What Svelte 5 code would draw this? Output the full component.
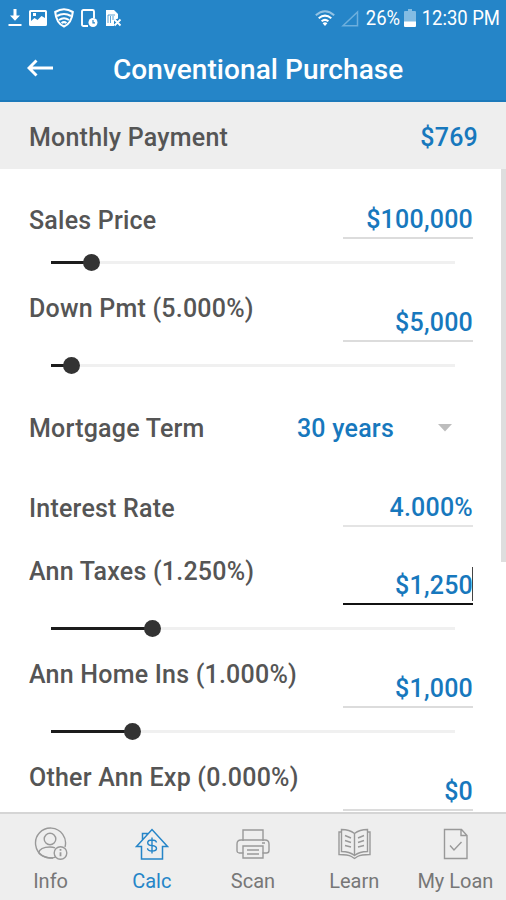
<script lang="ts">
    type Field = {
        label: string;
        value: string;
        kind: string;
        slider?: number;
        focused?: boolean;
    };

    const fields: Field[] = [
        { label: "Sales Price", value: "$100,000", kind: "price", slider: 10 },
        { label: "Down Pmt (5.000%)", value: "$5,000", kind: "stacked", slider: 5 },
        { label: "Mortgage Term", value: "30 years", kind: "term" },
        { label: "Interest Rate", value: "4.000%", kind: "rate" },
        { label: "Ann Taxes (1.250%)", value: "$1,250", kind: "stacked", slider: 25, focused: true },
        { label: "Ann Home Ins (1.000%)", value: "$1,000", kind: "stacked", slider: 20 },
        { label: "Other Ann Exp (0.000%)", value: "$0", kind: "stacked", slider: 0 },
    ];

    const tabs = ["Info", "Calc", "Scan", "Learn", "My Loan"];
    let active = "Calc";
</script>

<div class="screen">
    <header>
        <div class="status">
            <div class="notifications">
                <svg width="14" height="20" viewBox="0 0 14 20" fill="#fff">
                    <path d="M5.500 1h3v6.500h3.500L7 12.800 2 7.500h3.500zM.5 16h13v2H.5z" />
                </svg>
                <svg width="18" height="18" viewBox="0 0 18 18">
                    <path fill="#fff" fill-rule="evenodd" d="M1.500 1h15q1.500 0 1.500 1.500v13q0 1.500-1.500 1.500h-15Q0 17 0 15.500v-13Q0 1 1.500 1zM2 3v9l3.500-3 3 2 4-4L16 9V3zM4 4h3v3H4z" />
                </svg>
                <svg width="20" height="20" viewBox="0 0 20 20" fill="none" stroke="#fff" stroke-width="2.100">
                    <path d="M1.200 4Q10-1.500 18.800 4C18 12 15 16.500 10 18.500 5 16.500 2 12 1.200 4z" />
                    <path d="M3 8q7-4 14 0M5 12q5-3.400 10 0M7.500 15q2.500-1.800 5 0" />
                </svg>
                <svg width="17" height="19" viewBox="0 0 17 19" fill="none" stroke="#fff">
                    <path stroke-width="1.900" d="M7 17H2.500Q1 17 1 15.500v-13Q1 1 2.500 1h9Q13 1 13 2.500V9" />
                    <circle cx="12" cy="13.500" r="4.500" fill="#fff" stroke="none" />
                    <path stroke="#2585c8" stroke-width="1.200" d="M12 11v2.800h2" />
                </svg>
                <svg width="17" height="18" viewBox="0 0 17 18" fill="none">
                    <path fill="#fff" d="M1 1h8l4 4v4.500l-4 1.500v6H1z" />
                    <path stroke="#2585c8" opacity=".75" d="M3 14V6h7M5.500 7v7M8 7v4" />
                    <path stroke="#fff" stroke-width="1.800" d="m9.500 10.500 6 6m0-6-6 6" />
                </svg>
            </div>
            <div class="system">
                <svg width="20" height="17" viewBox="0 0 20 17" fill="none" stroke="#fff" stroke-width="2">
                    <path opacity=".5" d="M.8 5.200q9.200-8 18.400 0" />
                    <path d="M3.700 8.200q6.300-5.200 12.600 0M6.600 11.200q3.400-2.700 6.800 0" />
                    <path fill="#fff" stroke="none" d="M7.600 13.200q2.400-1.800 4.800 0L10 16z" />
                </svg>
                <svg class="signal" width="18" height="17" viewBox="0 0 18 17" fill="none" stroke="#6dafdd" stroke-width="1.500">
                    <path d="M2 15.800 16.500 2v13.800z" />
                </svg>
                <span class="percent">26%</span>
                <svg class="battery" width="12" height="18" viewBox="0 0 12 18">
                    <path fill="#83bce3" d="M4 0h4v2h3q1 0 1 1v10H0V3q0-1 1-1h3z" />
                    <path fill="#fff" d="M0 12.500h12V17q0 1-1 1H1q-1 0-1-1z" />
                </svg>
                <span class="clock">12:30 PM</span>
            </div>
        </div>
        <div class="titlebar">
            <svg width="27" height="18" viewBox="0 0 27 18" fill="none" stroke="#fff" stroke-width="2.900">
                <path d="M26 9H2M9.500 1.500 2 9l7.500 7.500" />
            </svg>
            <h1>Conventional Purchase</h1>
        </div>
    </header>

    <section class="summary">
        <span>Monthly Payment</span>
        <span class="amount">$769</span>
    </section>

    <main>
        <div class="fields">
            {#each fields as field}
                <div class="field {field.kind}">
                    <div class="line">
                        <span class="label">{field.label}</span>
                        <span class="value" class:focused={field.focused}>{field.value}</span>
                        {#if field.kind === "term"}
                            <svg class="caret" width="14" height="8" viewBox="0 0 14 8" fill="#bdbdbd">
                                <path d="M0 0h14L7 7.500z" />
                            </svg>
                        {/if}
                    </div>
                    {#if field.slider !== undefined}
                        <div class="slider">
                            <div class="done" style="width: {field.slider}%"></div>
                            <div class="thumb"></div>
                        </div>
                    {/if}
                </div>
            {/each}
        </div>
        <div class="scrollbar"></div>
    </main>

    <nav>
        {#each tabs as tab}
            <button class:active={tab === active} on:click={() => (active = tab)}>
                <svg width="34" height="34" viewBox="0 0 34 34" fill="none" stroke="currentColor" stroke-width="1.400">
                    {#if tab === "Info"}
                        <path d="M21.500 30.200A15 15 0 1 1 31 20" />
                        <circle cx="16" cy="12" r="5.800" />
                        <path d="M4.500 26q1.500-6 11.500-6 3 0 5 .8M4.500 26q5 5 14.500 5" />
                        <circle cx="26.500" cy="26" r="6.300" />
                        <path stroke-width="1.800" d="M26.500 25.300v4M26.500 22v1.800" />
                    {:else if tab === "Calc"}
                        <path stroke-width="1.500" d="M1.500 19.500 17 2.500l15.500 17h-5V32h-21V19.500zM7.500 13V6.500H12V8" />
                        <path d="M21.500 15.500q-.5-2.500-4.500-2.500-4.300 0-4.300 2.700 0 2.500 4.300 2.800 4.500.4 4.500 3 0 2.500-4.500 2.500-4.300 0-4.500-2.800M17 10.500v16" />
                    {:else if tab === "Scan"}
                        <path d="M7 14V3h20v11M7.500 26H3.500Q1 26 1 23.500V17q0-4 4-4h24q4 0 4 4v6.500q0 2.500-2.500 2.500h-4" />
                        <path d="M7 19h20v12H7zM11 23h12M11 27h12M26 16h3" />
                    {:else if tab === "Learn"}
                        <path d="M17.500 6.500Q12.500 2.500 4.500 2.500v22q8 0 13 4 5-4 13-4v-22q-8 0-13 4zM17.500 6.500v22" />
                        <path d="M4.500 5H2v22.500q9 0 12.500 2l3 2 3-2q3.500-2 12.500-2V5h-2.500M8 8.500l6 2.500M8 13.500l6 2M8 18.500l6 1.500M27 8.500l-6 2.500M27 13.500l-6 2M27 18.500l-6 1.500" />
                    {:else}
                        <path d="M6.500 2.500h17l5.500 6v23H6.500zM23 2.500v6h6M12 18.500l4 4.500 7.500-8" />
                    {/if}
                </svg>
                <span>{tab}</span>
            </button>
        {/each}
    </nav>
</div>

<style>
    :global(body) {
        margin: 0;
    }
    .screen {
        width: 506px;
        height: 900px;
        display: flex;
        flex-direction: column;
        overflow: hidden;
        background: #fff;
        color: #555;
        font-family: Roboto, "Liberation Sans", sans-serif;
        font-size: 25px;
        font-weight: 500;
        letter-spacing: 0.22px;
    }
    header {
        box-sizing: border-box;
        height: 102px;
        flex: none;
        background: #2585c8;
        border-bottom: 2px solid #1c79ba;
        color: #fff;
    }
    .status {
        height: 36px;
        display: flex;
        justify-content: space-between;
        align-items: center;
        padding: 0 6px 0 7px;
    }
    .notifications {
        display: flex;
        align-items: center;
        gap: 7px;
        padding-left: 1px;
    }
    .system {
        display: flex;
        align-items: center;
        font-size: 20.5px;
        font-weight: 400;
        letter-spacing: 0;
        white-space: nowrap;
    }
    .percent, .clock {
        transform: scaleX(0.9);
        transform-origin: right;
    }
    .percent {
        margin-left: -4px;
    }
    .clock {
        margin-left: -9px;
    }
    .signal {
        margin: 0 7px 0 6px;
    }
    .battery {
        margin: 0 6px 0 4px;
    }
    .titlebar {
        height: 64px;
        display: flex;
        align-items: center;
        padding: 0 27px;
        gap: 59px;
    }
    h1 {
        margin: 3px 0 0;
        font-size: 28px;
        font-weight: 500;
        letter-spacing: 0.07px;
        white-space: nowrap;
    }
    .summary {
        box-sizing: border-box;
        height: 67px;
        flex: none;
        display: flex;
        justify-content: space-between;
        align-items: center;
        padding: 3px 28px 0 29px;
        background: #eee;
    }
    .amount, .value {
        color: #1778bd;
    }
    main {
        flex: 1;
        min-height: 0;
        display: flex;
        overflow: hidden;
    }
    .fields {
        flex: 1;
        padding: 18px 28px 0 29px;
    }
    .scrollbar {
        width: 5px;
        height: 393px;
        background: #dedede;
    }
    .field {
        height: 103px;
    }
    .line {
        height: 52px;
        display: flex;
        justify-content: space-between;
        align-items: flex-start;
    }
    .label {
        line-height: 28px;
        padding-top: 5px;
        white-space: nowrap;
    }
    .value {
        box-sizing: border-box;
        width: 130px;
        height: 52px;
        padding-top: 19px;
        border-bottom: 2px solid #dcdcdc;
        line-height: 28px;
        text-align: right;
    }
    .value.focused {
        border-bottom-color: #111;
        background: linear-gradient(#444, #444) right 14px / 1px 34px no-repeat;
    }
    .price .label {
        padding-top: 20px;
    }
    .term {
        height: 70px;
    }
    .term .line {
        height: 70px;
        align-items: center;
    }
    .term .label {
        padding: 2px 0 0;
    }
    .term .value {
        width: auto;
        height: auto;
        padding: 2px 0 0;
        border: 0;
        margin-left: auto;
    }
    .caret {
        margin: 0 21px 0 44px;
    }
    .rate {
        box-sizing: border-box;
        height: 90px;
        padding-top: 12px;
    }
    .rate .label {
        padding-top: 20px;
    }
    .rate .value {
        border-color: #e4e4e4;
    }
    .slider {
        display: flex;
        align-items: center;
        width: 404px;
        height: 17px;
        margin: 15px 0 0 22px;
        background: linear-gradient(#f0f0f0, #f0f0f0) center / 100% 3px no-repeat;
    }
    .done {
        height: 3px;
        background: #1c1c1c;
    }
    .thumb {
        width: 17px;
        height: 17px;
        margin-left: -8px;
        border-radius: 50%;
        background: #333;
    }
    nav {
        box-sizing: border-box;
        height: 88px;
        flex: none;
        display: grid;
        grid-template-columns: repeat(5, 1fr);
        border-top: 2px solid #d5d5d5;
        background: #eee;
    }
    button {
        display: flex;
        flex-direction: column;
        align-items: center;
        gap: 8px;
        padding: 13px 0 0;
        border: 0;
        background: none;
        color: #999;
        font: 400 20px/24px Roboto, "Liberation Sans", sans-serif;
        letter-spacing: 0;
        white-space: nowrap;
    }
    button span {
        color: #777;
    }
    button.active, button.active span {
        color: #2585c8;
    }
</style>
